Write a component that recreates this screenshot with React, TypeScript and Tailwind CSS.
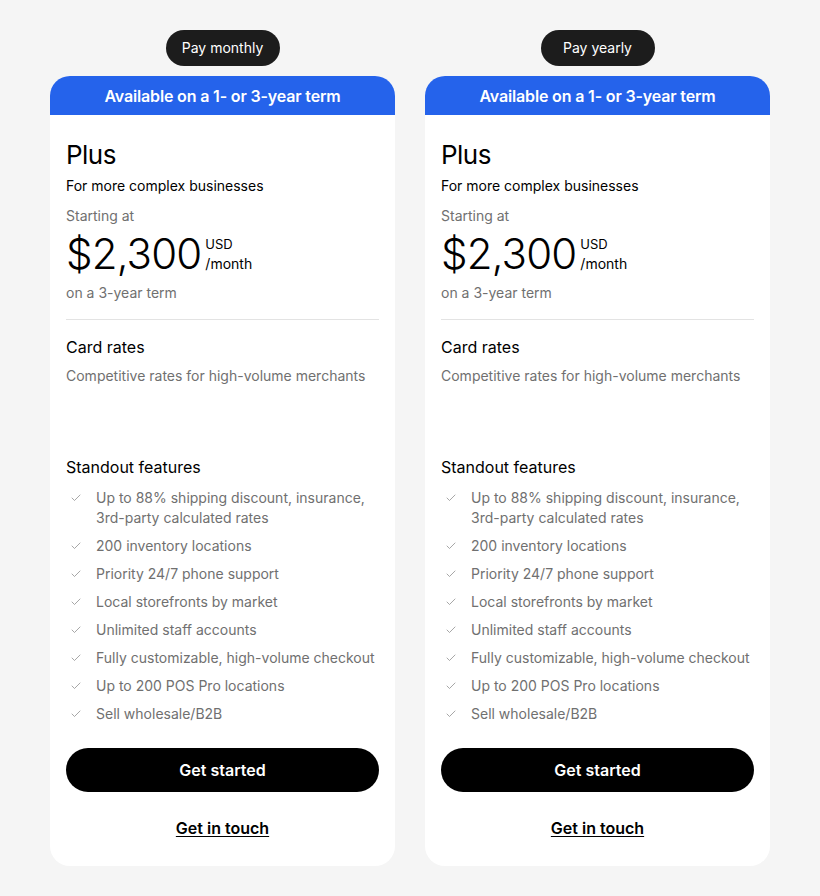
import { Check } from "lucide-react";

const features = [
    "Up to 88% shipping discount, insurance, 3rd-party calculated rates",
    "200 inventory locations",
    "Priority 24/7 phone support",
    "Local storefronts by market",
    "Unlimited staff accounts",
    "Fully customizable, high-volume checkout",
    "Up to 200 POS Pro locations",
    "Sell wholesale/B2B",
];

const PlanCard = (props: { label: string }) => {
    const { label } = props;
    return (
        <div className="flex flex-col items-center w-[345px]">
            <div className="h-9 w-[114px] flex items-center justify-center rounded-full bg-[#1c1c1c] text-white text-sm">
                {label}
            </div>
            <div className="mt-[10px] w-full rounded-[20px] bg-white overflow-hidden">
                <div className="h-[39px] bg-[#2563eb] flex items-center justify-center text-white text-base font-semibold tracking-[-0.01em]">
                    Available on a 1- or 3-year term
                </div>
                <div className="px-4 pt-[22px] pb-[26px] flex flex-col">
                    <div className="text-[26px] leading-9 text-black tracking-[-0.02em]">Plus</div>
                    <div className="mt-[3px] text-sm leading-5 text-black">For more complex businesses</div>
                    <div className="mt-[10px] text-sm leading-5 text-[#707070]">Starting at</div>
                    <div className="mt-[4px] flex items-center">
                        <span className="text-[42px] leading-[48px] font-light text-black tracking-[-0.02em]">$2,300</span>
                        <span className="ml-[4px] flex flex-col text-sm leading-5 text-black">
                            <span className="text-[13px]">USD</span>
                            <span>/month</span>
                        </span>
                    </div>
                    <div className="mt-[5px] text-sm leading-5 text-[#707070]">on a 3-year term</div>
                    <div className="mt-[16px] h-px bg-[#e3e3e3]" />
                    <div className="mt-[15px] text-base leading-6 text-black">Card rates</div>
                    <div className="mt-[7px] text-sm leading-5 text-[#707070]">Competitive rates for high-volume merchants</div>
                    <div className="mt-[69px] text-base leading-6 text-black">Standout features</div>
                    <ul className="mt-[9px] flex flex-col gap-2">
                        {features.map((f) => (
                            <li key={f} className="flex items-start text-sm leading-5 text-[#707070]">
                                <Check className="ml-[4px] mt-[4px] w-3 h-3 shrink-0 text-[#8a8a8a]" strokeWidth={1.5} />
                                <span className="ml-[14px]">{f}</span>
                            </li>
                        ))}
                    </ul>
                    <button className="mt-[24px] h-11 w-full rounded-full bg-black text-white text-base font-semibold">
                        Get started
                    </button>
                    <a className="mt-[24px] self-center text-base font-semibold text-black underline underline-offset-2">
                        Get in touch
                    </a>
                </div>
            </div>
        </div>
    );
};

export default function App() {
    return (
        <div className="min-h-[896px] w-[820px] bg-[#f5f5f5] pt-[30px] pl-[50px] flex gap-[30px] font-['Inter',sans-serif]">
            <PlanCard label="Pay monthly" />
            <PlanCard label="Pay yearly" />
        </div>
    );
}
